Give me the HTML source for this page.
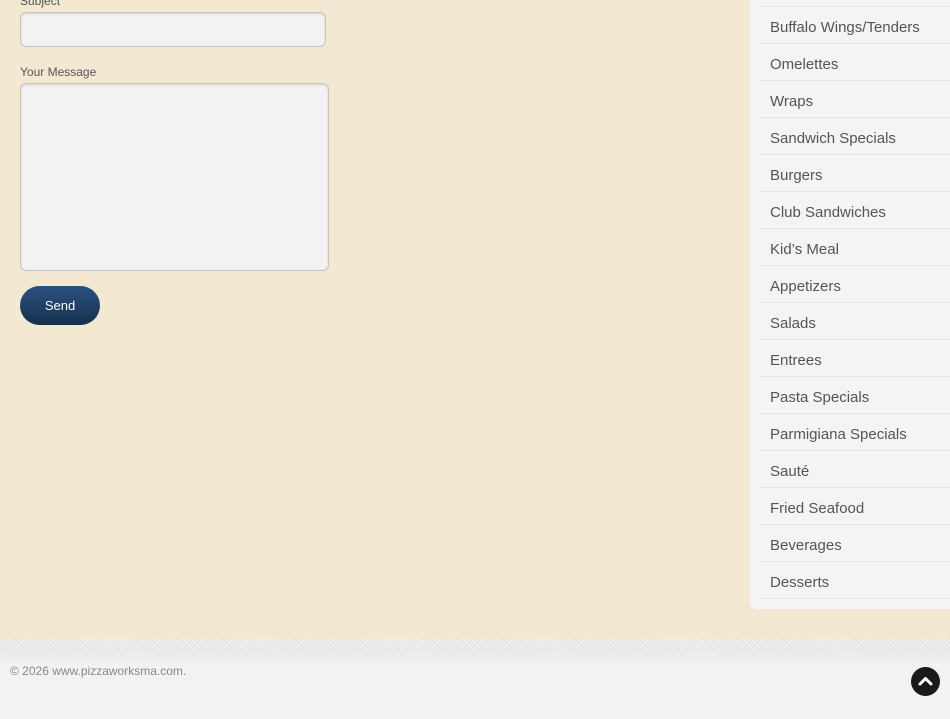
<!DOCTYPE html>
<html><head><style>
*{margin:0;padding:0;box-sizing:border-box}
body{width:950px;height:719px;overflow:hidden;background:#f3e8d2;font-family:"Liberation Sans",sans-serif;position:relative}
.lbl{position:absolute;left:20px;font-size:12px;color:#555}
.inp{position:absolute;left:20px;background:#f2f2f2;border:1px solid #c8c4bc;border-radius:6px;box-shadow:inset 0 1px 2px rgba(0,0,0,.12)}
.btn{position:absolute;left:20px;top:286px;width:80px;height:39px;border-radius:20px;background:linear-gradient(#2a527f,#15304f);color:#fff;font-size:13px;text-align:center;line-height:39px}
.side{position:absolute;left:750px;top:0;width:200px;height:609px;background:#f4f4f4;border-bottom-left-radius:5px}
.it{position:absolute;left:10px;width:190px;height:37px;border-bottom:1px solid #e4e4e4;font-size:15px;color:#555;padding-left:10px;padding-top:2px;line-height:37px}
.foot{position:absolute;left:0;top:638px;width:950px;height:81px;background:#f2f2f2}
.stripe{position:absolute;left:0;top:0;width:950px;height:12px;background:repeating-linear-gradient(45deg,#e2e2e2 0 1px,#efefef 1px 3px)}
.fade{position:absolute;left:0;top:12px;width:950px;height:14px;background:linear-gradient(#e9e9e9,#f2f2f2)}
.copy{position:absolute;left:10px;top:26px;font-size:12px;color:#888}
.up{position:absolute;left:911px;top:29px;width:29px;height:29px;border-radius:50%;background:#1a1a1a}
</style></head><body>
<div class="lbl" style="top:-6px">Subject</div>
<div class="inp" style="top:12px;width:306px;height:35px"></div>
<div class="lbl" style="top:65px">Your Message</div>
<div class="inp" style="top:83px;width:309px;height:188px"></div>
<div class="btn">Send</div>
<div class="side">
<div class="it" style="top:-30px"></div>
<div class="it" style="top:7px">Buffalo Wings/Tenders</div>
<div class="it" style="top:44px">Omelettes</div>
<div class="it" style="top:81px">Wraps</div>
<div class="it" style="top:118px">Sandwich Specials</div>
<div class="it" style="top:155px">Burgers</div>
<div class="it" style="top:192px">Club Sandwiches</div>
<div class="it" style="top:229px">Kid’s Meal</div>
<div class="it" style="top:266px">Appetizers</div>
<div class="it" style="top:303px">Salads</div>
<div class="it" style="top:340px">Entrees</div>
<div class="it" style="top:377px">Pasta Specials</div>
<div class="it" style="top:414px">Parmigiana Specials</div>
<div class="it" style="top:451px">Sauté</div>
<div class="it" style="top:488px">Fried Seafood</div>
<div class="it" style="top:525px">Beverages</div>
<div class="it" style="top:562px">Desserts</div>
</div>
<div class="foot">
<div class="stripe"></div><div class="fade"></div>
<div class="copy">© 2026 www.pizzaworksma.com.</div>
<div class="up"><svg width="29" height="29" viewBox="0 0 29 29"><path d="M9 17 L14.5 11.5 L20 17" stroke="#fff" stroke-width="3" fill="none" stroke-linecap="round" stroke-linejoin="round"/></svg></div>
</div>
</body></html>
